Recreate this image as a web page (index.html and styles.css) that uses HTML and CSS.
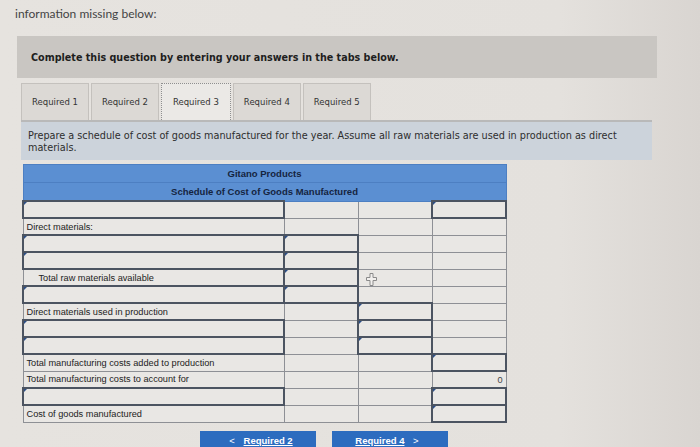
FILE: index.html
```html
<!DOCTYPE html>
<html lang="en">
<head>
<meta charset="utf-8">
<title>Schedule of Cost of Goods Manufactured</title>
<link rel="stylesheet" href="styles.css">
</head>
<body>
<div class="page">
  <p class="intro">information missing below:</p>
  <div class="banner">Complete this question by entering your answers in the tabs below.</div>
  <div class="tabs">
    <div class="tab">Required 1</div>
    <div class="tab">Required 2</div>
    <div class="tab active">Required 3</div>
    <div class="tab">Required 4</div>
    <div class="tab">Required 5</div>
  </div>
  <div class="instructions">Prepare a schedule of cost of goods manufactured for the year. Assume all raw materials are used in production as direct materials.</div>
  <div class="sheet">
    <table class="schedule">
      <colgroup>
        <col class="c-label"><col class="c-num"><col class="c-num"><col class="c-num">
      </colgroup>
      <thead>
        <tr class="head"><th colspan="4">Gitano Products</th></tr>
        <tr class="head"><th colspan="4">Schedule of Cost of Goods Manufactured</th></tr>
      </thead>
      <tbody>
        <tr><td class="inp"></td><td></td><td></td><td class="inp"></td></tr>
        <tr><td>Direct materials:</td><td></td><td></td><td></td></tr>
        <tr><td class="inp"></td><td class="inp"></td><td></td><td></td></tr>
        <tr><td class="inp"></td><td class="inp"></td><td></td><td></td></tr>
        <tr><td class="indent">Total raw materials available</td><td class="inp"></td><td></td><td></td></tr>
        <tr><td class="inp"></td><td class="inp"></td><td></td><td></td></tr>
        <tr><td>Direct materials used in production</td><td></td><td class="inp"></td><td></td></tr>
        <tr><td class="inp"></td><td></td><td class="inp"></td><td></td></tr>
        <tr><td class="inp"></td><td></td><td class="inp"></td><td></td></tr>
        <tr><td>Total manufacturing costs added to production</td><td></td><td></td><td class="inp"></td></tr>
        <tr><td>Total manufacturing costs to account for</td><td></td><td></td><td class="num">0</td></tr>
        <tr><td class="inp"></td><td></td><td></td><td class="inp"></td></tr>
        <tr><td>Cost of goods manufactured</td><td></td><td></td><td class="inp"></td></tr>
      </tbody>
    </table>
    <svg class="cursor" width="11" height="13" viewBox="0 0 11 13" aria-hidden="true">
      <path d="M4 0.5h3v4h3.5v3H7v5H4v-5H0.5v-3H4z" fill="#f2f0ee" stroke="#8a8a8a" stroke-width="1"/>
    </svg>
  </div>
  <div class="nav">
    <button class="navbtn"><span class="chev">&lt;</span> <u>Required 2</u></button>
    <button class="navbtn"><u>Required 4</u> <span class="chev">&gt;</span></button>
  </div>
</div>
</body>
</html>
```

FILE: styles.css
```css
html, body {
  margin: 0;
  padding: 0;
  height: 447px;
  overflow: hidden;
}
body {
  background: linear-gradient(90deg, #e6e3df 0%, #e4e1dd 80%, #d9d5d1 100%);
  color: #333;
  font-family: "DejaVu Sans", Verdana, sans-serif;
}
.page {
  padding: 6px 0 0 0;
}
.intro {
  margin: 0 0 0 15px;
  font-family: Lato, "Open Sans", sans-serif;
  font-size: 12px;
  line-height: 16px;
  color: #444;
}
.banner {
  margin: 14px 43px 0 17px;
  height: 42px;
  padding-left: 14px;
  display: flex;
  align-items: center;
  background: #c9c6c2;
  font-weight: bold;
  font-size: 9.6px;
  color: #1e1e1e;
}
.tabs {
  display: flex;
  margin: 5px 0 0 21px;
  gap: 2px;
}
.tab {
  height: 37px;
  padding: 0 10px;
  box-sizing: border-box;
  display: flex;
  align-items: center;
  background: #dcd9d5;
  border: 1px solid #c4c1bd;
  border-bottom: none;
  font-size: 8.5px;
  color: #333;
}
.tab.active {
  background: #ebe9e6;
  border: 1px dotted #8f8f8f;
  border-bottom: none;
  padding: 0 11px;
}
.instructions {
  margin: 0 48px 0 21px;
  padding: 8px 20px 6px 7px;
  background: #ccd3db;
  border-top: 2px solid #b9b9b9;
  font-size: 9.7px;
  line-height: 12px;
  color: #2e2e2e;
}
.sheet {
  position: relative;
  margin: 4px 0 0 22px;
  width: 484px;
}
.schedule {
  border-collapse: collapse;
  table-layout: fixed;
  width: 484px;
  font-family: "Liberation Sans", Arial, sans-serif;
  font-size: 9.2px;
  color: #222;
}
.c-label { width: 261px; }
.c-num { width: 74px; }
.head th {
  height: 17px;
  padding: 0;
  line-height: 15px;
  background: #5b8fd2;
  border: 1px solid #4d7fc2;
  color: #15243f;
  font-weight: bold;
  font-size: 9.5px;
  text-align: center;
}
.schedule td {
  height: 17px;
  padding: 0 2px 0 3px;
  line-height: 14px;
  box-sizing: border-box;
  background: #e9e7e4;
  border: 1px solid #8e9095;
  white-space: nowrap;
}
.schedule td.indent {
  padding-left: 15px;
}
.schedule td.num {
  text-align: right;
  color: #444;
  padding-right: 3px;
}
.schedule td.inp {
  position: relative;
  border: 2px solid #4c5461;
}
.schedule td.inp::before {
  content: "";
  position: absolute;
  left: 0;
  top: 0;
  border-top: 3px solid #2d4f86;
  border-right: 3px solid transparent;
}
.cursor {
  position: absolute;
  left: 344px;
  top: 109px;
}
.nav {
  display: flex;
  gap: 16px;
  margin: 8px 0 0 200px;
}
.navbtn {
  width: 116px;
  height: 26px;
  padding: 0 0 8px 0;
  border: none;
  background: #2c6cbf;
  color: #fff;
  font-family: "Liberation Sans", Arial, sans-serif;
  font-weight: bold;
  font-size: 9.5px;
}
.chev {
  font-weight: normal;
  margin: 0 6px;
}
```
